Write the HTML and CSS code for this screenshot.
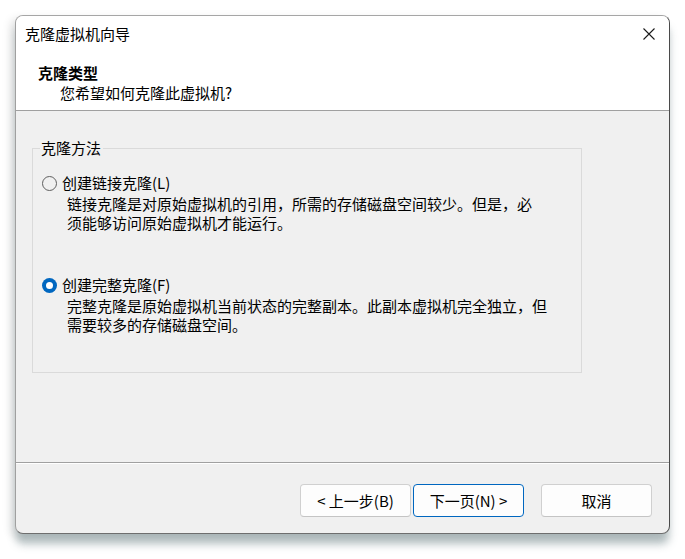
FILE: index.html
```html
<!DOCTYPE html>
<html lang="zh-CN">
<head>
<meta charset="utf-8">
<title>克隆虚拟机向导</title>
<link rel="stylesheet" href="styles.css">
</head>
<body>
<div class="window">
  <div class="titlebar">
    <span class="title">克隆虚拟机向导</span>
    <span class="close" aria-label="关闭">
      <svg width="12" height="12" viewBox="0 0 12 12"><path d="M0.5 0.5 L11.5 11.5 M11.5 0.5 L0.5 11.5" stroke="#1a1a1a" stroke-width="1.1" fill="none"/></svg>
    </span>
  </div>
  <div class="header">
    <div class="h-title">克隆类型</div>
    <div class="h-sub">您希望如何克隆此虚拟机?</div>
  </div>
  <div class="content">
    <fieldset class="group">
      <legend class="group-label">克隆方法</legend>
      <div class="option first">
        <div class="radio-row"><span class="radio"></span><span class="radio-text">创建链接克隆(L)</span></div>
        <p class="desc">链接克隆是对原始虚拟机的引用，所需的存储磁盘空间较少。但是，必<br>须能够访问原始虚拟机才能运行。</p>
      </div>
      <div class="option second">
        <div class="radio-row"><span class="radio checked"></span><span class="radio-text">创建完整克隆(F)</span></div>
        <p class="desc">完整克隆是原始虚拟机当前状态的完整副本。此副本虚拟机完全独立，但<br>需要较多的存储磁盘空间。</p>
      </div>
    </fieldset>
  </div>
  <div class="footer">
    <button class="btn">&lt; 上一步(B)</button>
    <button class="btn default">下一页(N) &gt;</button>
    <button class="btn cancel">取消</button>
  </div>
</div>
</body>
</html>
```

FILE: styles.css
```css
* { box-sizing: border-box; }
html, body {
  margin: 0;
  padding: 0;
  background: #ffffff;
}
body {
  font-family: "Noto Sans CJK SC", "Noto Sans", sans-serif;
  font-size: 15px;
  color: #000;
  width: 685px;
  height: 559px;
  overflow: hidden;
}
.window {
  margin: 15px 0 0 15px;
  width: 655px;
  height: 519px;
  border: 1px solid;
  border-color: #a6a6a6 #4a4a4a #6e6e6e #a0a0a0;
  border-radius: 8px;
  background: #f0f0f0;
  display: flex;
  flex-direction: column;
  overflow: hidden;
  box-shadow: 0 11px 9px -1px rgba(90, 115, 120, 0.45), -5px 3px 9px rgba(0, 0, 0, 0.10);
}
.titlebar {
  height: 39px;
  background: #fff;
  display: flex;
  align-items: center;
  justify-content: space-between;
  padding: 0 14px 3px 9px;
  flex: none;
}
.title {
  line-height: 20px;
}
.close {
  display: flex;
  width: 12px;
  height: 12px;
}
.header {
  height: 56px;
  background: #fff;
  border-bottom: 1px solid #a0a0a0;
  padding-top: 8px;
  flex: none;
}
.h-title {
  font-weight: 700;
  line-height: 20px;
  padding-left: 22px;
}
.h-sub {
  line-height: 20px;
  padding-left: 44px;
}
.content {
  flex: 1;
  padding: 27px 0 0 16px;
}
.group {
  margin: 0;
  width: 550px;
  border: 1px solid #dadada;
  padding: 0 0 38px 7px;
  min-inline-size: 0;
}
.group-label {
  padding: 0 2px 0 1px;
  line-height: 20px;
}
.option.first { margin-top: 14px; }
.option.second { margin-top: 42px; }
.radio-row {
  display: flex;
  align-items: center;
  height: 22px;
}
.radio {
  width: 15px;
  height: 15px;
  border-radius: 50%;
  border: 1px solid #5f5f5f;
  margin-left: 2px;
  margin-right: 5px;
  display: flex;
  align-items: center;
  justify-content: center;
}
.radio.checked {
  border: none;
  background: #0067c0;
}
.radio.checked::after {
  content: "";
  width: 7px;
  height: 7px;
  border-radius: 50%;
  background: #fff;
}
.radio-text { line-height: 20px; }
.desc {
  margin: 0;
  padding-left: 27px;
  line-height: 19px;
}
.footer {
  height: 71px;
  flex: none;
  border-top: 1px solid #a0a0a0;
  box-shadow: inset 0 1px 0 #ffffff;
  padding: 21px 17px 0 0;
  display: flex;
  justify-content: flex-end;
  align-items: flex-start;
  gap: 2px;
}
.btn {
  width: 111px;
  height: 33px;
  font-family: inherit;
  font-size: 15px;
  color: #000;
  background: #fdfdfd;
  border: 1px solid #d0d0d0;
  border-bottom-color: #c4c4c4;
  border-radius: 4px;
  padding: 0;
  line-height: 20px;
}
.btn.default {
  border-color: #0067c0;
}
.btn.cancel {
  margin-left: 15px;
}
```
